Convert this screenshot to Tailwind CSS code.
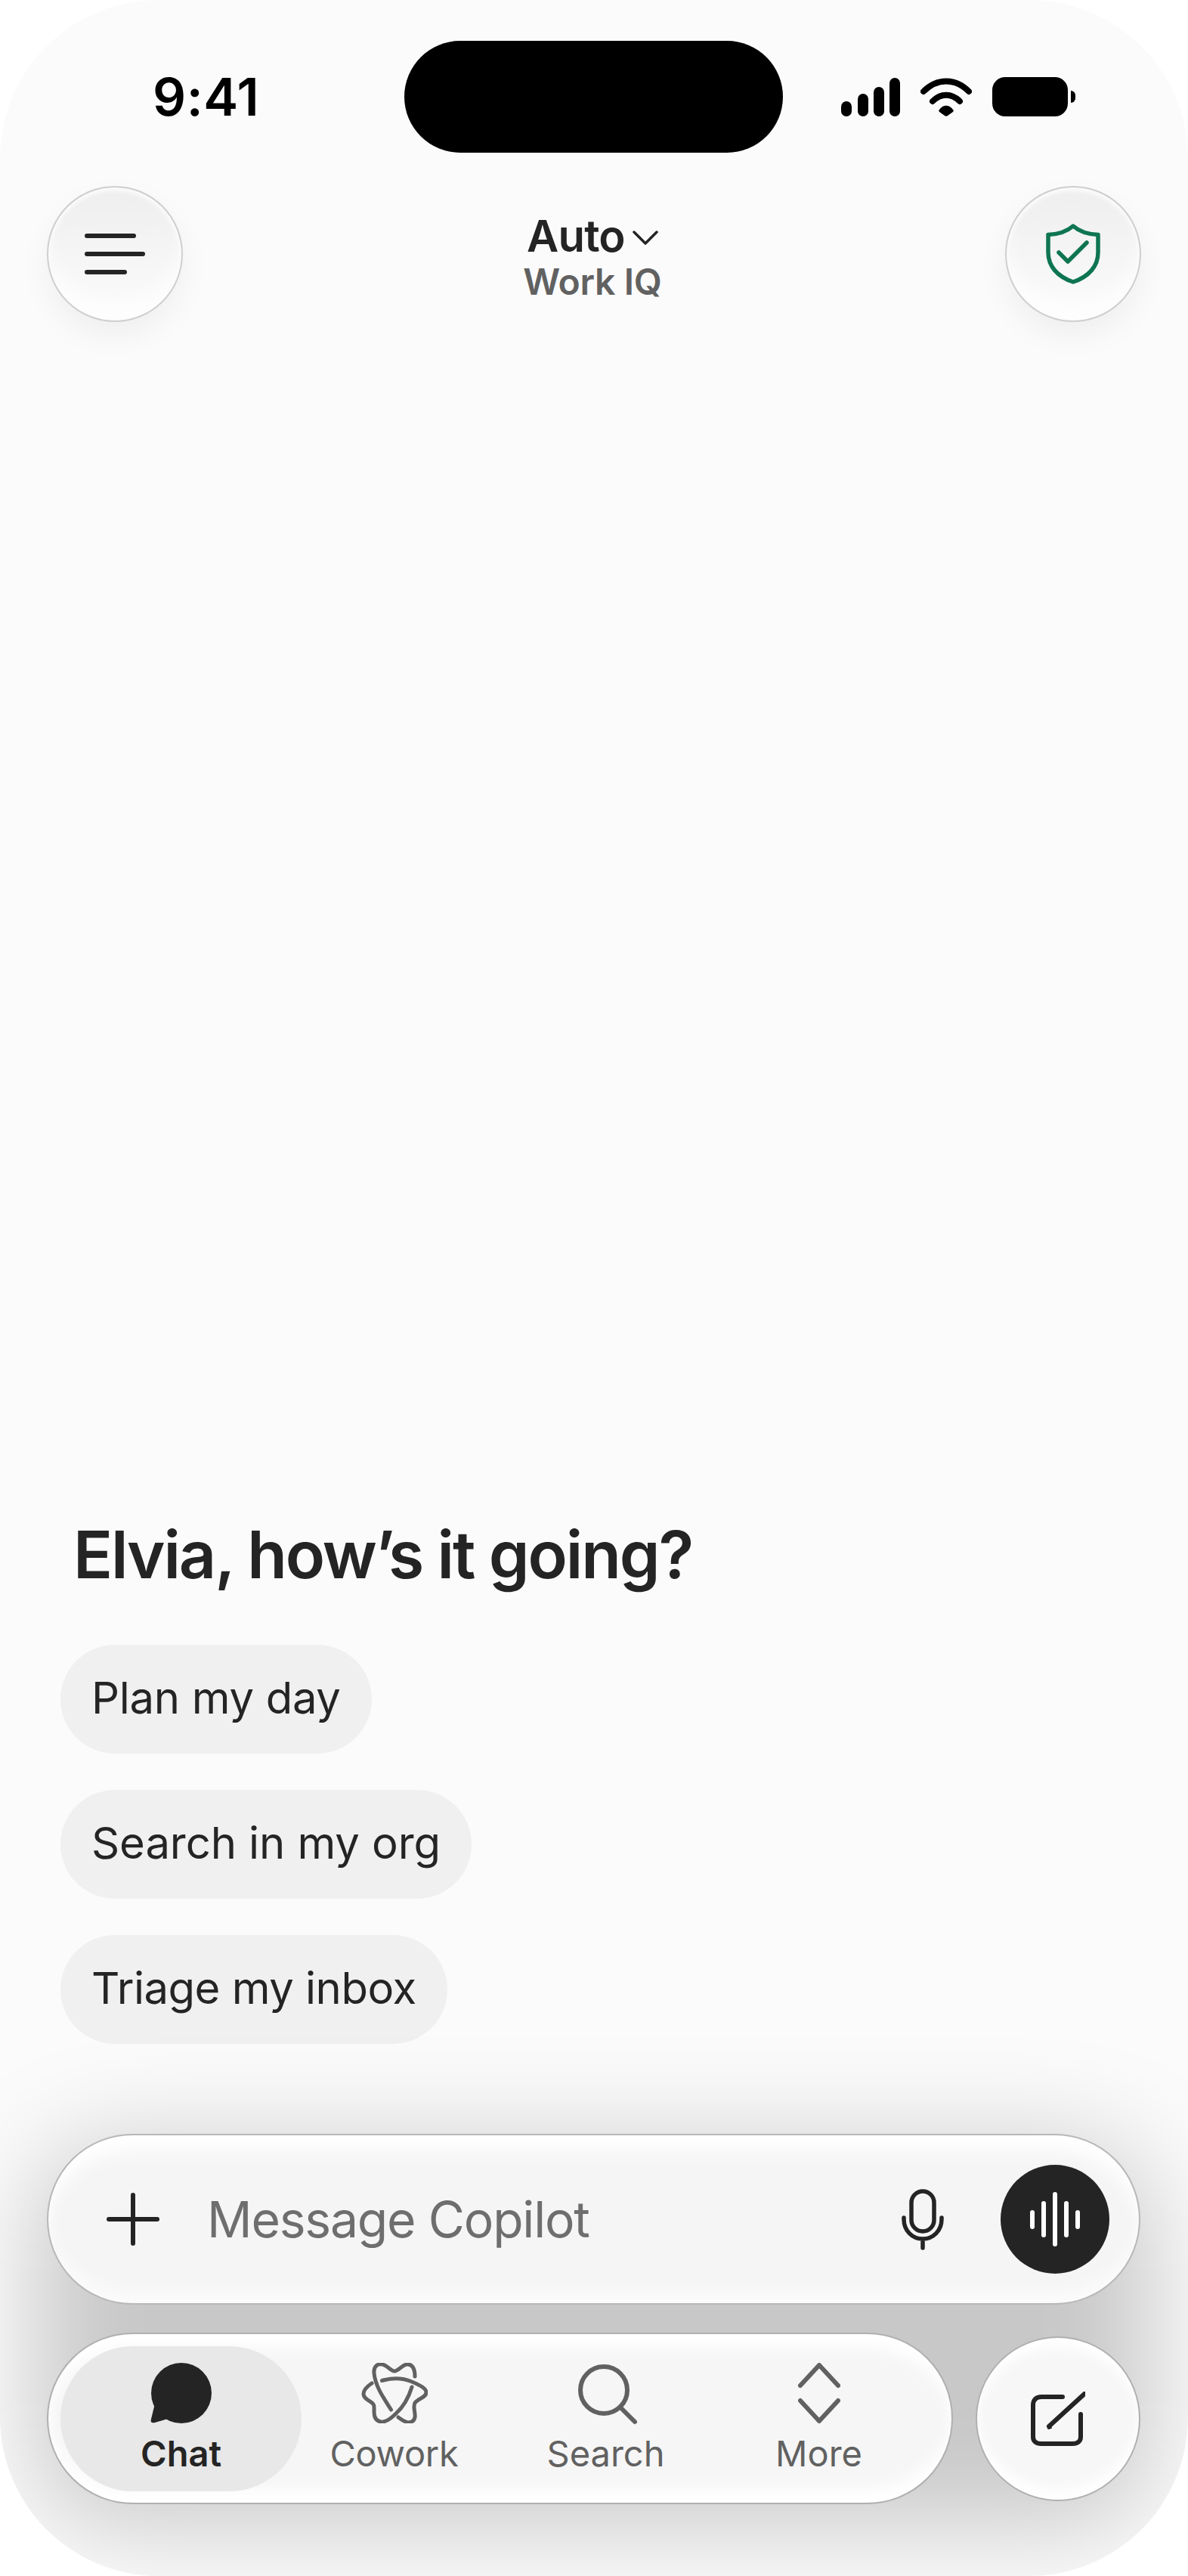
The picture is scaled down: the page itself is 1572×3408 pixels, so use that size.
<!doctype html>
<html lang="en">
<head>
<meta charset="utf-8">
<title>Copilot</title>
<script src="https://cdn.jsdelivr.net/npm/@tailwindcss/browser@4"></script>
</head>
<body class="bg-white">
<div class="w-[1572px] h-[3408px] rounded-[210px] overflow-hidden bg-[#fbfbfb] flex flex-col text-[#242424] font-[family-name:Inter,sans-serif]">
  <!-- status bar -->
  <div class="grid grid-cols-[535px_501px_1fr] items-center mt-[54px] h-[148px] shrink-0">
    <div class="pl-[202px] text-[69px] leading-none font-semibold tracking-[0.5px] text-black">9:41</div>
    <div class="h-[148px] rounded-full bg-black"></div>
    <div class="pl-[77px] flex items-center h-[52px]">
      <svg class="w-[78px] h-[51px] fill-black" viewBox="0 0 78 51"><rect x="0" y="31" width="14" height="20" rx="7"/><rect x="22" y="21" width="14" height="30" rx="7"/><rect x="43" y="12" width="14" height="39" rx="7"/><rect x="64" y="0" width="14" height="51" rx="7"/></svg>
      <svg class="w-[68px] h-[51px] ml-[27px]" viewBox="0 0 68 51"><path d="M4 18C22 0 46 0 64 18M16 31C27 20 41 20 52 31" fill="none" stroke="#000" stroke-width="8" stroke-linecap="round"/><path d="M25 42C30 35 38 35 43 42C44 43 44 44 43 45L36 50C35 51 33 51 32 50L25 45C24 44 24 43 25 42Z" fill="#000"/></svg>
      <div class="w-[100px] h-[52px] rounded-[17px] bg-black ml-[27px]"></div>
      <div class="w-[6px] h-[16px] rounded-r-full bg-black ml-[4px]"></div>
    </div>
  </div>

  <!-- header -->
  <div class="flex items-center justify-between pl-[62px] pr-[62px] mt-[44px] shrink-0">
    <button class="w-[180px] h-[180px] rounded-full border-2 border-[#cfcfcf] bg-gradient-to-b from-[#eeeeee] to-[#fcfcfc] shadow-[0_18px_40px_rgba(0,0,0,0.05),inset_0_4px_6px_rgba(255,255,255,0.9),inset_0_-24px_24px_rgba(255,255,255,0.6)] flex flex-col items-start justify-center gap-[18px] pl-[48px]">
      <span class="block w-[68px] h-[6px] rounded-full bg-[#242424]"></span>
      <span class="block w-[80px] h-[6px] rounded-full bg-[#242424]"></span>
      <span class="block w-[56px] h-[6px] rounded-full bg-[#242424]"></span>
    </button>
    <div class="flex flex-col items-center mt-[3px] mr-[4px]">
      <div class="flex items-center text-[58px] leading-[70px] font-semibold tracking-[-0.8px]">Auto
        <svg class="w-[34px] h-[20px] ml-[10px] mt-[4px]" viewBox="0 0 34 20"><path d="M2 3L17 18L32 3" fill="none" stroke="#242424" stroke-width="3.5" stroke-linecap="round" stroke-linejoin="round"/></svg>
      </div>
      <div class="text-[48px] leading-[52px] font-semibold tracking-[-0.3px] text-[#616161]">Work IQ</div>
    </div>
    <button class="w-[180px] h-[180px] rounded-full border-2 border-[#cfcfcf] bg-gradient-to-b from-[#eeeeee] to-[#fcfcfc] shadow-[0_18px_40px_rgba(0,0,0,0.05),inset_0_4px_6px_rgba(255,255,255,0.9),inset_0_-24px_24px_rgba(255,255,255,0.6)] flex items-center justify-center">
      <svg class="w-[72px] h-[80px]" viewBox="0 0 72 80" fill="none" stroke="#0e7551" stroke-width="5.5" stroke-linecap="round" stroke-linejoin="round"><path d="M36 3C28 10 17 14 3 14.5V38C3 56 15 70 36 77C57 70 69 56 69 38V14.5C55 14 44 10 36 3Z"/><path d="M17 38L29 50L54 25"/></svg>
    </button>
  </div>

  <!-- greeting + prompts -->
  <div class="mt-auto pl-[80px] shrink-0">
    <h1 class="pl-[17px] text-[86px] leading-[100px] font-semibold tracking-[-2.1px] text-[#242424]">Elvia, how’s it going?</h1>
    <div class="mt-[69px] flex flex-col items-start gap-[48px]">
      <div class="h-[144px] pb-[3px] rounded-full bg-[#f0f0f0] px-[41px] flex items-center text-[58px] tracking-[-0.3px]">Plan my day</div>
      <div class="h-[144px] pb-[3px] rounded-full bg-[#f0f0f0] px-[41px] flex items-center text-[58px] tracking-[-0.1px]">Search in my org</div>
      <div class="h-[144px] pb-[3px] rounded-full bg-[#f0f0f0] px-[41px] flex items-center text-[58px] tracking-[-0.5px]">Triage my inbox</div>
    </div>
  </div>

  <!-- dock -->
  <div class="relative mt-[119px] shrink-0">
    <div class="absolute left-[48px] right-[50px] top-[15px] bottom-[66px] rounded-[100px] bg-black/20 blur-[68px]"></div>
    <div class="relative ml-[62px] mr-[63px] h-[226px] rounded-full border-2 border-[#b8b8b8] bg-[#f5f5f5] shadow-[inset_0_26px_24px_-6px_#ffffff,inset_0_-22px_24px_-8px_rgba(255,255,255,0.7)] flex items-center pl-[77px] pr-[39px]">
      <svg class="w-[70px] h-[70px] shrink-0" viewBox="0 0 70 70" fill="none" stroke="#242424" stroke-width="6" stroke-linecap="round"><path d="M35 3V67M3 35H67"/></svg>
      <div class="ml-[63px] text-[66px] leading-none tracking-[-1.2px] text-[#6e6e6e]">Message Copilot</div>
      <svg class="w-[56px] h-[81px] ml-auto shrink-0" viewBox="0 0 56 81" fill="none" stroke="#242424" stroke-width="5.5" stroke-linecap="round"><rect x="13" y="3" width="30" height="53" rx="15"/><path d="M3 38V40C3 55 14 66 28 66C42 66 53 55 53 40V38M28 66V78"/></svg>
      <div class="ml-[75px] w-[144px] h-[144px] rounded-full bg-[#242424] flex items-center justify-center gap-[9.5px] shrink-0">
        <span class="block w-[5.5px] h-[25px] rounded-full bg-white"></span>
        <span class="block w-[5.5px] h-[48px] rounded-full bg-white"></span>
        <span class="block w-[5.5px] h-[72px] rounded-full bg-white"></span>
        <span class="block w-[5.5px] h-[48px] rounded-full bg-white"></span>
        <span class="block w-[5.5px] h-[25px] rounded-full bg-white"></span>
      </div>
    </div>

    <div class="relative mt-[37px] mb-[95px] pl-[62px] pr-[63px] flex items-center justify-between">
      <nav class="w-[1199px] h-[227px] rounded-full border-2 border-[#b0b0b0] bg-[#f6f6f6] shadow-[inset_0_24px_22px_-6px_#ffffff,inset_0_-24px_22px_-6px_#ffffff] pl-[16px] flex items-center">
        <div class="w-[319px] h-[192px] pt-[1px] rounded-full bg-[#e8e8e8] flex flex-col items-center justify-center">
          <svg class="w-[81px] h-[80px]" viewBox="0 0 81 80" fill="#242424"><circle cx="41" cy="40" r="40"/><path d="M7 50L0.8 75C0 79 2 80 6 79L30 72Z"/></svg>
          <div class="mt-[12px] text-[47px] leading-[56px] font-semibold">Chat</div>
        </div>
        <div class="w-[281px] ml-[-18px] pt-[1px] flex flex-col items-center text-[#616161]">
          <svg class="w-[88px] h-[80px]" viewBox="0 0 88 80" fill="none" stroke="#616161" stroke-width="5" stroke-linecap="round"><path d="M39.5 62C30 47 19 32 17 14C16 4 22 1 28 2C34 3 39 11 44 11C49 11 54 3 60 2C67 1 71 7 71 18"/><path d="M27.5 23.5C40 20 55 20 67 25C79 30 86 34 86 39C86 46 75 47 71 53C68 58 72 66 71 72C70 78 64 80 59 78C55 77 52 74 49 72"/><path d="M67 32C63 45 56 58 46 67C38 75 32 79 26 78C19 77 17 71 17 65C17 58 18 55 13 52C8 49 3 46 3 41C3 36 8 31 14 27"/></svg>
          <div class="mt-[12px] text-[47px] leading-[56px] tracking-[-0.3px]">Cowork</div>
        </div>
        <div class="w-[281px] ml-[-1px] pt-[1px] flex flex-col items-center text-[#616161]">
          <svg class="w-[80px] h-[80px] overflow-visible" viewBox="0 0 80 80" fill="none" stroke="#616161" stroke-width="6" stroke-linecap="round"><circle cx="37" cy="36" r="31"/><path d="M59 59L78 78"/></svg>
          <div class="mt-[12px] text-[47px] leading-[56px]">Search</div>
        </div>
        <div class="w-[281px] ml-[1px] pt-[1px] flex flex-col items-center text-[#616161]">
          <svg class="w-[56px] h-[80px]" viewBox="0 0 56 80" fill="none" stroke="#616161" stroke-width="6" stroke-linecap="round" stroke-linejoin="round"><path d="M3 30L28 3L53 30M3 50L28 77L53 50"/></svg>
          <div class="mt-[12px] text-[47px] leading-[56px]">More</div>
        </div>
      </nav>
      <button class="w-[218px] h-[218px] rounded-full border-2 border-[#b0b0b0] bg-[#f7f7f7] shadow-[inset_0_16px_18px_-4px_#ffffff,inset_0_-18px_18px_-4px_#ffffff] flex items-center justify-center">
        <svg class="w-[72px] h-[72px]" viewBox="0 0 72 72" fill="none" stroke="#242424" stroke-width="6" stroke-linecap="round" stroke-linejoin="round"><path d="M42 7H14C7 7 3 11 3 18V60C3 66 7 69 14 69H55C62 69 66 66 66 60V30"/><path d="M71 3L24 46"/><path d="M24 46L27 48L23 49Z" fill="#242424" stroke-width="2"/></svg>
      </button>
    </div>
  </div>
</div>
</body>
</html>
